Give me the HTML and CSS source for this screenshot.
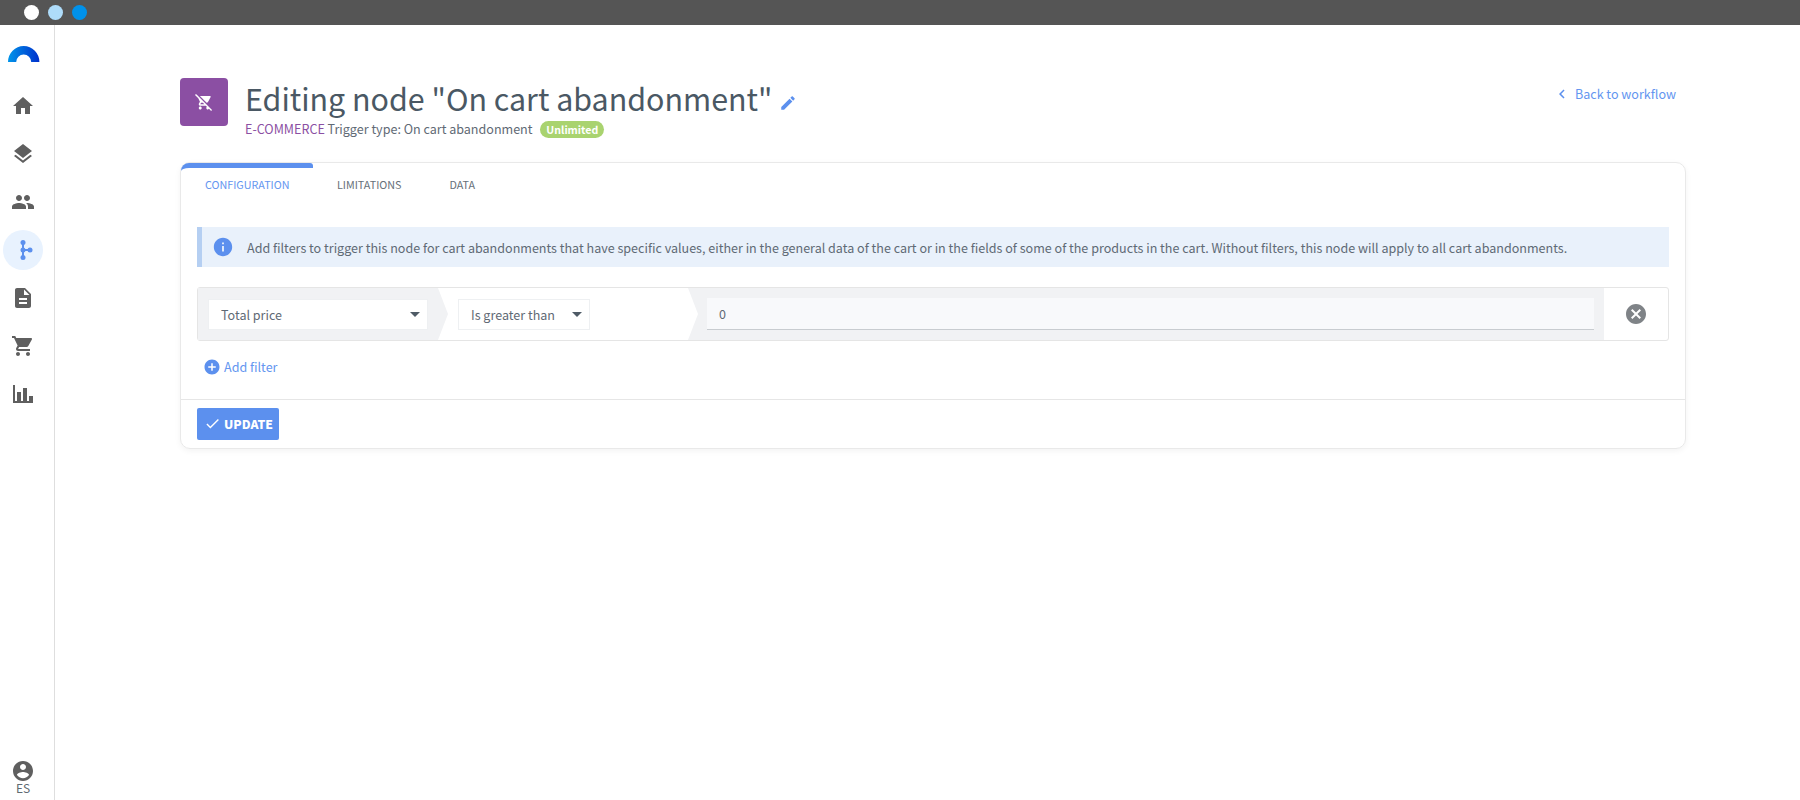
FILE: index.html
```html
<!DOCTYPE html>
<html lang="en">
<head>
<meta charset="utf-8">
<title>Editing node</title>
<link rel="stylesheet" href="styles.css">
</head>
<body>
<header class="topbar">
  <span class="dot dot-white"></span>
  <span class="dot dot-light"></span>
  <span class="dot dot-blue"></span>
</header>
<div class="app">
  <nav class="sidebar">
    <svg class="logo" viewBox="0 0 32 16" width="32" height="16">
      <defs><linearGradient id="lg" x1="0" x2="1" y1="0" y2="0"><stop offset="0" stop-color="#0095ea"/><stop offset="1" stop-color="#0030cc"/></linearGradient></defs>
      <path fill="url(#lg)" d="M0 16A15.7 16 0 0 1 31.4 16H23.2A7.5 7.5 0 0 0 8.2 16Z"/>
    </svg>
    <ul class="nav-list">
      <li class="nav-item"><svg viewBox="0 0 24 24"><path d="M10 20v-6h4v6h5v-8h3L12 3 2 12h3v8z"/></svg></li>
      <li class="nav-item"><svg viewBox="0 0 24 24"><path d="M11.99 18.54l-7.37-5.73L3 14.07l9 7 9-7-1.63-1.27-7.38 5.74zM12 16l7.36-5.73L21 9l-9-7-9 7 1.63 1.27L12 16z"/></svg></li>
      <li class="nav-item"><svg viewBox="0 0 24 24"><path d="M16 11c1.66 0 2.99-1.34 2.99-3S17.66 5 16 5c-1.66 0-3 1.34-3 3s1.34 3 3 3zm-8 0c1.66 0 2.99-1.34 2.99-3S9.66 5 8 5C6.34 5 5 6.34 5 8s1.34 3 3 3zm0 2c-2.33 0-7 1.17-7 3.5V19h14v-2.5c0-2.33-4.67-3.5-7-3.5zm8 0c-.29 0-.62.02-.97.05 1.16.84 1.97 1.97 1.97 3.45V19h6v-2.5c0-2.33-4.67-3.5-7-3.5z"/></svg></li>
      <li class="nav-item nav-item-active"><svg viewBox="0 0 24 24"><path d="M11 4h2v16h-2zM12 11h8v2h-8z"/><circle cx="12" cy="4.500" r="2.500"/><circle cx="12" cy="12" r="2.500"/><circle cx="12" cy="19.500" r="2.500"/><circle cx="19" cy="12" r="2.500"/></svg></li>
      <li class="nav-item"><svg viewBox="0 0 24 24"><path d="M14 2H6c-1.1 0-1.99.9-1.99 2L4 20c0 1.1.89 2 1.99 2H18c1.1 0 2-.9 2-2V8l-6-6zm2 16H8v-2h8v2zm0-4H8v-2h8v2zm-3-5V3.500L18.500 9H13z"/></svg></li>
      <li class="nav-item"><svg viewBox="0 0 24 24"><path d="M7 18c-1.100 0-1.990.9-1.990 2S5.900 22 7 22s2-.9 2-2-.9-2-2-2zM1 2v2h2l3.600 7.590-1.350 2.450c-.16.28-.25.61-.25.96 0 1.100.9 2 2 2h12v-2H7.420c-.14 0-.25-.11-.25-.25l.03-.12.9-1.630h7.450c.75 0 1.410-.41 1.750-1.030l3.580-6.490c.08-.14.12-.31.12-.48 0-.55-.45-1-1-1H5.210l-.94-2H1zm16 16c-1.100 0-1.990.9-1.990 2s.89 2 1.990 2 2-.9 2-2-.9-2-2-2z"/></svg></li>
      <li class="nav-item"><svg viewBox="0 0 24 24"><path d="M22 21H2V3h2v16h2v-9h4v9h2V6h4v13h2v-5h4z"/></svg></li>
    </ul>
    <div class="user">
      <svg viewBox="0 0 24 24"><path d="M12 2C6.480 2 2 6.480 2 12s4.480 10 10 10 10-4.480 10-10S17.520 2 12 2zm0 3c1.660 0 3 1.340 3 3s-1.340 3-3 3-3-1.340-3-3 1.340-3 3-3zm0 14.200c-2.500 0-4.710-1.280-6-3.220.03-1.990 4-3.080 6-3.080 1.990 0 5.970 1.090 6 3.080-1.290 1.940-3.500 3.220-6 3.220z"/></svg>
      <span class="user-lang">ES</span>
    </div>
  </nav>
  <main class="content">
    <div class="page-head">
      <div class="node-icon">
        <svg viewBox="0 0 24 24"><path d="M22.730 22.730L2.770 2.770 2 2l-.73-.73L0 2.540l4.390 4.390 2.210 4.660-1.350 2.450c-.16.28-.25.61-.25.96 0 1.100.9 2 2 2h7.460l1.380 1.380c-.5.36-.83.95-.83 1.620 0 1.100.89 2 1.990 2 .67 0 1.260-.33 1.620-.84L21.460 24l1.270-1.270zM7.420 15c-.14 0-.25-.11-.25-.25l.03-.12.9-1.630h2.360l2 2H7.420zm8.130-2c.75 0 1.410-.41 1.750-1.030l3.580-6.490c.08-.14.12-.31.12-.48 0-.55-.45-1-1-1H6.540l9.010 9zM7 18c-1.100 0-1.990.9-1.990 2S5.900 22 7 22s2-.9 2-2-.9-2-2-2z"/></svg>
      </div>
      <div class="head-text">
        <h1 class="title">Editing node "On cart abandonment"
          <svg class="edit-icon" viewBox="0 0 24 24"><path d="M3 17.250V21h3.750L17.810 9.940l-3.750-3.750L3 17.250zM20.710 7.040c.39-.39.39-1.020 0-1.410l-2.340-2.340c-.39-.39-1.020-.39-1.410 0l-1.830 1.830 3.750 3.750 1.830-1.830z"/></svg>
        </h1>
        <p class="subtitle"><span class="category">E-COMMERCE</span> Trigger type: On cart abandonment <span class="badge">Unlimited</span></p>
      </div>
      <a class="back-link">
        <svg viewBox="0 0 24 24"><path d="M15.410 7.410L14 6l-6 6 6 6 1.410-1.410L10.830 12z"/></svg>
        Back to workflow
      </a>
    </div>
    <section class="card">
      <div class="tabs">
        <span class="tab tab-active">CONFIGURATION</span>
        <span class="tab">LIMITATIONS</span>
        <span class="tab">DATA</span>
      </div>
      <div class="card-body">
        <div class="alert">
          <svg viewBox="0 0 24 24"><path d="M12 2C6.480 2 2 6.480 2 12s4.480 10 10 10 10-4.480 10-10S17.520 2 12 2zm1 15h-2v-6h2v6zm0-8h-2V7h2v2z"/></svg>
          <span>Add filters to trigger this node for cart abandonments that have specific values, either in the general data of the cart or in the fields of some of the products in the cart. Without filters, this node will apply to all cart abandonments.</span>
        </div>
        <div class="filter">
          <div class="seg seg-field">
            <div class="select select-field"><span>Total price</span><i class="caret"></i></div>
          </div>
          <div class="seg seg-op">
            <div class="select select-op"><span>Is greater than</span><i class="caret"></i></div>
          </div>
          <div class="seg seg-value">
            <div class="value-input">0</div>
          </div>
          <div class="seg-remove">
            <svg viewBox="0 0 24 24"><path d="M12 2C6.470 2 2 6.470 2 12s4.470 10 10 10 10-4.470 10-10S17.530 2 12 2zm5 13.590L15.590 17 12 13.410 8.410 17 7 15.590 10.590 12 7 8.410 8.410 7 12 10.590 15.590 7 17 8.410 13.410 12 17 15.590z"/></svg>
          </div>
        </div>
        <a class="add-filter">
          <svg viewBox="0 0 24 24"><path d="M12 2C6.480 2 2 6.480 2 12s4.480 10 10 10 10-4.480 10-10S17.520 2 12 2zm5 11h-4v4h-2v-4H7v-2h4V7h2v4h4v2z"/></svg>
          Add filter
        </a>
      </div>
      <div class="card-foot">
        <button class="btn-update">
          <svg viewBox="0 0 24 24"><path d="M9 16.200L4.800 12l-1.400 1.400L9 19 21 7l-1.400-1.400z"/></svg>
          UPDATE
        </button>
      </div>
    </section>
  </main>
</div>
</body>
</html>
```

FILE: styles.css
```css
* { box-sizing: border-box; }
html, body { margin: 0; height: 100%; }
body {
  display: flex;
  flex-direction: column;
  height: 800px;
  overflow: hidden;
  background: #fff;
  color: #4f5b66;
  font-family: "Noto Sans CJK JP", "Noto Sans", sans-serif;
  font-size: 12.55px;
}
.topbar {
  flex: 0 0 25px;
  display: flex;
  align-items: center;
  gap: 9px;
  padding-left: 24px;
  background: #555;
}
.dot { width: 15px; height: 15px; border-radius: 50%; }
.dot-white { background: #fff; }
.dot-light { background: #aedcfa; }
.dot-blue { background: #0091ea; }

.app { flex: 1; display: flex; min-height: 0; }
.sidebar {
  flex: 0 0 55px;
  display: flex;
  flex-direction: column;
  align-items: flex-start;
  border-right: 1px solid #dedede;
  padding: 21px 0 0 3px;
}
.logo { display: block; margin-left: 5px; }
.nav-list { list-style: none; margin: 24px 0 0; padding: 0; }
.nav-item {
  width: 40px;
  height: 40px;
  margin: 0 0 8px;
  display: flex;
  align-items: center;
  justify-content: center;
  border-radius: 50%;
}
.nav-item svg { width: 24px; height: 24px; fill: #5f5f5f; }
.nav-item-active { background: #e8f2fe; }
.nav-item-active svg { fill: #5c90ee; }
.user {
  margin-top: auto;
  width: 40px;
  display: flex;
  flex-direction: column;
  align-items: center;
  padding-bottom: 8px;
}
.user svg { width: 24px; height: 24px; fill: #5f5f5f; }
.user-lang { font-size: 12px; line-height: 9px; color: #5f6a72; }

.content { flex: 1; padding: 53px 114px 0 125px; min-width: 0; }
.page-head { display: flex; align-items: flex-start; height: 84px; }
.node-icon {
  flex: 0 0 48px;
  height: 48px;
  border-radius: 4px;
  background: #8b4fa3;
  display: flex;
  align-items: center;
  justify-content: center;
}
.node-icon svg { width: 18px; height: 18px; fill: #fff; }
.head-text { margin-left: 17px; flex: 1; }
.title {
  margin: 0;
  font-size: 30.4px;
  font-weight: 400;
  line-height: 40px;
  color: #4a5864;
  white-space: nowrap;
}
.edit-icon { width: 18px; height: 18px; fill: #5c90ee; margin-left: 0; vertical-align: -1px; }
.subtitle { margin: 2px 0 0; font-size: 12.55px; line-height: 18px; color: #5f6a75; }
.category { color: #8b4fa3; }
.badge {
  display: inline-block;
  margin-left: 5px;
  padding: 0 6px;
  border-radius: 9px;
  background: #a9d36f;
  color: #fff;
  font-size: 10.6px;
  font-weight: 700;
  line-height: 17px;
}
.back-link {
  display: flex;
  align-items: center;
  gap: 4px;
  margin: 7px 10px 0 0;
  color: #6496f0;
  font-size: 12.55px;
  line-height: 18px;
}
.back-link svg { width: 18px; height: 18px; fill: #5c90ee; }

.card {
  width: 1506px;
  height: 287px;
  border: 1px solid #e9e9e9;
  border-radius: 10px;
  box-shadow: 0 2px 6px rgba(0, 0, 0, .05);
  display: flex;
  flex-direction: column;
}
.tabs { display: flex; height: 40px; }
.tab {
  padding: 13px 24px 0;
  height: 40px;
  font-size: 10.75px;
  line-height: 18px;
  color: #667079;
}
.tab-active {
  width: 132px;
  border-top: 5px solid #5c90ee;
  border-radius: 8px 3px 0 0;
  padding-top: 8px;
  color: #6496f0;
}
.card-body { flex: 1; padding: 24px 16px 0; }
.alert {
  height: 40px;
  background: #e9f1fb;
  border-left: 5px solid #b5cff2;
  display: flex;
  align-items: center;
  padding-left: 10px;
  gap: 13px;
  font-size: 12.55px;
  color: #5f6a75;
}
.alert svg { width: 22px; height: 22px; fill: #5c90ee; flex: none; }
.filter {
  margin-top: 20px;
  height: 54px;
  display: flex;
  border: 1px solid #e5e5e5;
  border-radius: 3px;
}
.seg { position: relative; display: flex; align-items: center; height: 100%; }
.seg-field { flex: 0 0 240px; padding-left: 10px; background: #f1f2f4; }
.seg-op { flex: 0 0 250px; padding-left: 20px; background: #fff; }
.seg-value { flex: 1; padding: 0 10px 0 19px; background: #f1f2f4; }
.seg-field::after, .seg-op::after {
  content: "";
  position: absolute;
  left: 100%;
  top: 0;
  bottom: 0;
  width: 10px;
  z-index: 1;
  clip-path: polygon(0 0, 100% 50%, 0 100%);
}
.seg-field::after { background: #f1f2f4; }
.seg-op::after { background: #fff; }
.select {
  height: 31px;
  background: #fff;
  border: 1px solid #eef0f2;
  display: flex;
  align-items: center;
  justify-content: space-between;
  padding: 0 7px 0 12px;
  font-size: 12.55px;
  color: #5f6a75;
}
.select-field { width: 220px; }
.select-op { width: 132px; }
.caret {
  width: 0;
  height: 0;
  border-left: 5px solid transparent;
  border-right: 5px solid transparent;
  border-top: 5px solid #4f5b66;
}
.value-input {
  flex: 1;
  height: 32px;
  background: #f8f9fb;
  border-bottom: 1px solid #c8ccd0;
  padding-left: 12px;
  line-height: 31px;
  font-size: 12.55px;
  color: #5f6a75;
}
.seg-remove { flex: 0 0 64px; display: flex; align-items: center; justify-content: center; }
.seg-remove svg { width: 24px; height: 24px; fill: #7f8387; }
.add-filter {
  display: flex;
  align-items: center;
  gap: 3px;
  margin: 16px 0 0 6px;
  color: #6496f0;
  font-size: 12.55px;
  line-height: 20px;
}
.add-filter svg { width: 18px; height: 18px; fill: #5c90ee; }
.card-foot { height: 49px; border-top: 1px solid #e6e6e6; padding: 8px 16px; }
.btn-update {
  width: 82px;
  height: 32px;
  border: 0;
  border-radius: 2px;
  background: #5c90ee;
  color: #fff;
  font-family: inherit;
  font-size: 12.2px;
  line-height: 30px;
  font-weight: 900;
  display: flex;
  align-items: center;
  gap: 3px;
  padding: 0 0 1px 7px;
}
.btn-update svg { width: 17px; height: 17px; fill: #fff; }
```
